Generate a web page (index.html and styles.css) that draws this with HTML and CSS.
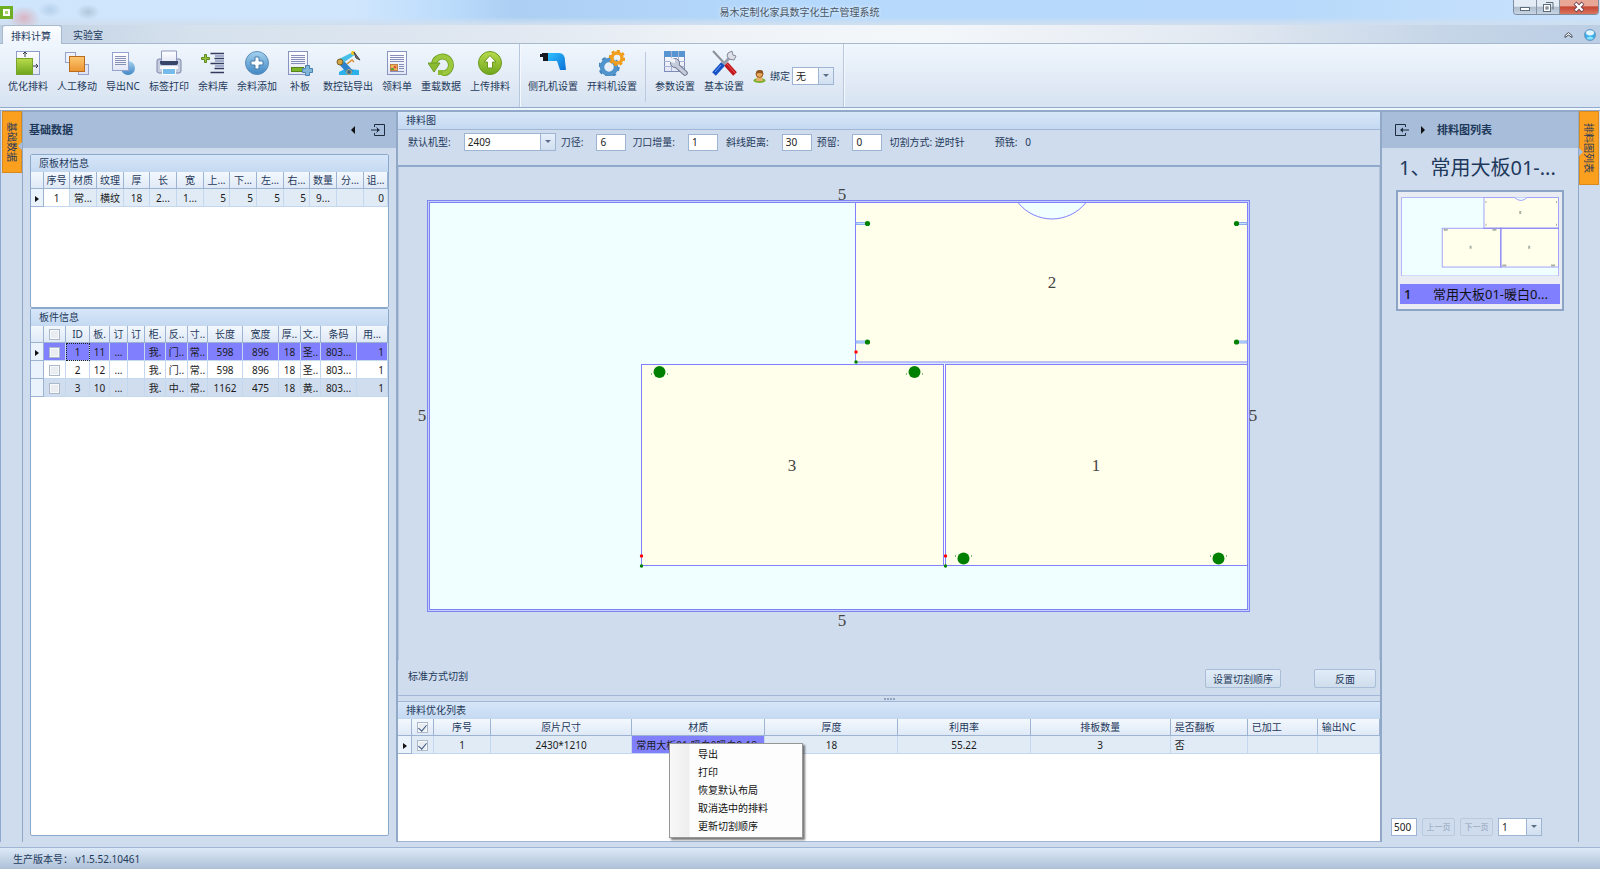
FILE: index.html
```html
<!DOCTYPE html>
<html lang="zh-CN">
<head>
<meta charset="utf-8">
<title>易木定制化家具数字化生产管理系统</title>
<link rel="stylesheet" href="styles.css">
</head>
<body>
<svg class="defs" aria-hidden="true">
  <defs>
    <linearGradient id="green" x1="0" y1="0" x2="0" y2="1"><stop offset="0" stop-color="#b9dc4c"/><stop offset="1" stop-color="#6fa51c"/></linearGradient>
    <linearGradient id="blue" x1="0" y1="0" x2="0" y2="1"><stop offset="0" stop-color="#a6d2ef"/><stop offset="1" stop-color="#3f86c4"/></linearGradient>
    <linearGradient id="orange" x1="0" y1="0" x2="0" y2="1"><stop offset="0" stop-color="#fdc873"/><stop offset="1" stop-color="#ec9430"/></linearGradient>
    <linearGradient id="paper" x1="0" y1="0" x2="0" y2="1"><stop offset="0" stop-color="#ffffff"/><stop offset="1" stop-color="#e2e6f5"/></linearGradient>
    <linearGradient id="drill" x1="0" y1="0" x2="1" y2="1"><stop offset="0" stop-color="#2fc0ff"/><stop offset="1" stop-color="#0a6fd6"/></linearGradient>
  </defs>
</svg>
<div class="app">
  <header class="titlebar">
    <svg class="logo" viewBox="0 0 13 13"><rect width="13" height="13" fill="#6eae22"/><rect x="3" y="3" width="7" height="7" fill="#fff"/><path d="M5 5h3v3H5z" fill="#a9d06f"/></svg>
    <h1 class="title">易木定制化家具数字化生产管理系统</h1>
    <div class="winbtns">
      <button class="win" aria-label="最小化"><svg viewBox="0 0 14 12"><rect x="2.500" y="6.500" width="9" height="3" fill="#fff" stroke="#5e6b7a"/></svg></button>
      <button class="win" aria-label="还原"><svg viewBox="0 0 14 12"><path d="M5 1.500h7v7" fill="none" stroke="#5e6b7a"/><rect x="2.500" y="3.500" width="7" height="7" fill="#fff" stroke="#5e6b7a"/><rect x="5" y="6" width="2" height="2" fill="#fff" stroke="#5e6b7a"/></svg></button>
      <button class="win close" aria-label="关闭"><svg viewBox="0 0 14 12"><path d="M3 2l8 8M11 2l-8 8" stroke="#6e4350" stroke-width="4"/><path d="M3.500 2.500l7 7M10.500 2.500l-7 7" stroke="#fff" stroke-width="2.400"/></svg></button>
    </div>
  </header>
  <nav class="tabs">
    <button class="tab active">排料计算</button>
    <button class="tab">实验室</button>
    <div class="tabtools">
      <button class="plain" aria-label="折叠"><svg width="9" height="8" viewBox="0 0 9 8"><path d="M1 4.500l3.500-3 3.500 3v2l-3.500-2.500-3.500 2.500z" fill="#fff" stroke="#454c58"/></svg></button>
      <button class="plain" aria-label="帮助"><svg width="12" height="12" viewBox="0 0 12 12"><circle cx="6" cy="6" r="5.500" fill="#38aee8" stroke="#7497c0"/><ellipse cx="6" cy="3.800" rx="4" ry="2.600" fill="#e3f6ff"/><ellipse cx="6" cy="9" rx="3" ry="1.500" fill="#8be3ff"/></svg></button>
    </div>
  </nav>

  <section class="ribbon">
    <div class="rgroup">
      <button class="tool"><svg viewBox="0 0 26 26"><rect x="1.500" y="1.500" width="23" height="23" fill="url(#paper)" stroke="#8c9cc8"/><rect x="1.500" y="8.500" width="16" height="16" fill="url(#green)" stroke="#79a32c"/><path d="M10 7V2M8 4l2-2 2 2M18 16h5M21 14l2 2-2 2" fill="none" stroke="#333b48"/></svg>优化排料</button>
      <button class="tool"><svg viewBox="0 0 26 26"><rect x="1.500" y="2.500" width="10" height="10" fill="#eef1fa" stroke="#95a3cc"/><rect x="14.500" y="14.500" width="10" height="10" fill="#dfe5f4" stroke="#95a3cc"/><rect x="5.500" y="6.500" width="15" height="15" fill="url(#orange)" stroke="#b96c1e"/></svg>人工移动</button>
      <button class="tool"><svg viewBox="0 0 26 26"><circle cx="18" cy="18" r="7" fill="url(#blue)"/><rect x="2.500" y="2.500" width="16" height="18" fill="url(#paper)" stroke="#95a3cc"/><path d="M5 6.500h11M5 8.500h11M5 10.500h11M5 12.500h11M5 14.500h11" stroke="#8791b8"/></svg>导出NC</button>
      <button class="tool"><svg viewBox="0 0 26 26"><rect x="1" y="9" width="24" height="14" rx="2" fill="#c6cde0" stroke="#7c87a8"/><path d="M5.500 1h15v12h-15z" fill="url(#paper)" stroke="#8d99be"/><path d="M4 11h18v2q0 2-3 2H7q-3 0-3-2z" fill="#37456b"/><path d="M4 16h18v3H4z" fill="#f5f7fc"/><path d="M6.500 18.500h13v6h-13z" fill="#74bbec" stroke="#fff"/></svg>标签打印</button>
      <button class="tool"><svg viewBox="0 0 26 26"><path d="M10.500 3.500H24M14.500 8.500H24M10.500 13.500H24M14.500 18.500H24M10.500 22.500H24" stroke="#323b5e" stroke-width="1.500"/><path d="M15 6h9M15 11h9M15 16h9" stroke="#a3add0" stroke-width="2"/><path d="M4.500 4.500h2v3h3v2h-3v3h-2v-3h-3v-2h3z" fill="#97c53c" stroke="#5b8a20"/></svg>余料库</button>
      <button class="tool"><svg viewBox="0 0 26 26"><circle cx="13" cy="13" r="11.500" fill="url(#blue)" stroke="#5c8ebb"/><path d="M11 7h4v4h4v4h-4v4h-4v-4H7v-4h4z" fill="#fff" stroke="#467ba9"/></svg>余料添加</button>
      <button class="tool"><svg viewBox="0 0 26 26"><rect x="1.500" y="1.500" width="19" height="23" fill="url(#paper)" stroke="#8794c0"/><path d="M4 5.500h14M4 7.500h14M4 9.500h14M4 11.500h14M4 13.500h14" stroke="#858fb9"/><rect x="4.500" y="17.500" width="12" height="4" fill="#7fb32a" stroke="#56851c"/><path d="M18.500 15.500h4v3h3v4h-3v3h-4v-3h-3v-4h3z" fill="#7fb6d9" stroke="#4c81ae"/></svg>补板</button>
      <button class="tool"><svg viewBox="0 0 26 26"><path d="M4 25v-3q4-3 9-3l11 1v5z" fill="#2cb1ea"/><path d="M6 12l10 11" stroke="#2d82cd" stroke-width="6"/><path d="M4 9L18 2l3 2-13 9z" fill="#45bfe8"/><circle cx="5" cy="12" r="3" fill="#d2a544" stroke="#7b602c"/><circle cx="14" cy="22" r="2.500" fill="#45688c" stroke="#b5ae71"/><circle cx="18" cy="3" r="2" fill="#f6c51f"/><path d="M19 2l6 8-4-2z" fill="#777" stroke="#444"/><path d="M12 14l5-4 2 2" stroke="#d98e2d" stroke-width="1.500" fill="none"/></svg>数控钻导出</button>
      <button class="tool"><svg viewBox="0 0 26 26"><rect x="3.500" y="1.500" width="19" height="23" fill="url(#paper)" stroke="#8794c0"/><path d="M6 5.500h14M6 7.500h14M6 9.500h14M6 11.500h14M15 14.500h5M15 16.500h5M15 18.500h5M6 21.500h14" stroke="#858fb9"/><rect x="6.500" y="14.500" width="7" height="6" fill="#f2b65c" stroke="#c08046"/><circle cx="11" cy="17" r="1.500" fill="#d9593a"/><path d="M7 18h3v2H7z" fill="#659c37"/></svg>领料单</button>
      <button class="tool"><svg viewBox="0 0 26 26"><path d="M6 14a8.500 8.500 0 1 1 8 9.500" fill="none" stroke="#6c9b24" stroke-width="6"/><path d="M6 14a8.500 8.500 0 1 1 8 9.500" fill="none" stroke="#9bc83c" stroke-width="4.500"/><path d="M0 13h12l-6 9z" fill="#8abb30" stroke="#6c9b24"/><path d="M10 20h5v5h-5z" fill="#8abb30"/></svg>重载数据</button>
      <button class="tool"><svg viewBox="0 0 26 26"><circle cx="13" cy="13" r="11.500" fill="url(#green)" stroke="#6b9a20"/><path d="M13 5.500l6 6.500h-3.500v6h-5v-6H7z" fill="#fff" stroke="#6b9a20"/></svg>上传排料</button>
    </div>
    <div class="rgroup">
      <button class="tool"><svg viewBox="0 0 26 26"><path d="M8 3h11q6 0 6 8l1 9h-6l-3-9H8z" fill="url(#drill)"/><path d="M0 4h2V3h6v8H3V7H0z" fill="#16191f"/></svg>侧孔机设置</button>
      <button class="tool"><svg viewBox="0 0 26 26"><circle cx="10" cy="17" r="7" fill="none" stroke="#4f94cc" stroke-width="4.500"/><circle cx="10" cy="17" r="9.700" fill="none" stroke="#4486bd" stroke-width="2" stroke-dasharray="4 3.600"/><circle cx="18" cy="8" r="5" fill="none" stroke="#f2a021" stroke-width="3.500"/><circle cx="18" cy="8" r="7.200" fill="none" stroke="#ef9714" stroke-width="2" stroke-dasharray="3 2.600"/></svg>开料机设置</button>
      <span class="rsep"></span>
      <button class="tool"><svg viewBox="0 0 26 26"><rect x="2.500" y="1.500" width="20" height="20" fill="url(#paper)" stroke="#7f8cb9"/><path d="M2 1h21v6H2z" fill="#5795d2"/><path d="M9.500 1v20M16.500 1v20M2 11.500h21M2 16.500h21" stroke="#a6b3d3"/><path d="M14 15l9 8" stroke="#6f7993" stroke-width="5.500" stroke-linecap="round"/><circle cx="13" cy="13" r="4.500" fill="#c6ccdb" stroke="#6f7993"/><path d="M14 15l9 8" stroke="#c6ccdb" stroke-width="3.500" stroke-linecap="round"/><path d="M9 8l4 1v4l-5-1z" fill="#eef2f9"/></svg>参数设置</button>
      <button class="tool"><svg viewBox="0 0 26 26"><path d="M2 1l13 14" stroke="#8c8f98" stroke-width="2"/><path d="M15 14l9 10" stroke="#c0181e" stroke-width="5"/><path d="M16 14l8 9" stroke="#f05450"/><path d="M20 6L11 16" stroke="#9aa0ad" stroke-width="3"/><path d="M12 14L3 24" stroke="#1651c4" stroke-width="5"/><path d="M10 15l-6 7" stroke="#70a3ff"/><path d="M17 3l4-2 1 4 3 1-2 4-5-1-2-3z" fill="#dde0e8" stroke="#858a98"/></svg>基本设置</button>
      <label class="bind" for="bind"><svg width="13" height="13" viewBox="0 0 13 13"><ellipse cx="6.500" cy="10.500" rx="6" ry="2.500" fill="#7eae2e"/><path d="M4 7h5l1 4H3z" fill="#e7b06a"/><circle cx="6.500" cy="4" r="3.500" fill="#e6a75a" stroke="#965e25"/><path d="M3 4q0-4 4-4t3 4q-4-2-7 0z" fill="#925822"/></svg>绑定</label>
      <span class="combo w42"><select id="bind"><option>无</option></select></span>
    </div>
  </section>

  <main class="main">
    <aside class="strip"><button class="side left">基础数据</button></aside>
    <section class="dock">
      <header class="dockhead"><h2>基础数据</h2>
        <button class="plain" aria-label="收起"><svg width="6" height="8" viewBox="0 0 6 8"><path d="M5 0v8L1 4z" fill="#111"/></svg></button>
        <button class="plain" aria-label="固定"><svg width="14" height="12" viewBox="0 0 14 12"><path d="M3.500 3V.5h10v11h-10V9M0 6h8M5.500 3.500L8 6 5.500 8.500" fill="none" stroke="#1d2b3e"/><path d="M6 4v4l3-2z" fill="#1d2b3e"/></svg></button>
      </header>
      <div class="dockbody">
        <section class="box board">
          <h3>原板材信息</h3>
          <table class="grid">
            <colgroup><col style="width:13px"><col style="width:26px"><col style="width:27px"><col style="width:27px"><col style="width:26px"><col style="width:27px"><col style="width:27px"><col style="width:26px"><col style="width:27px"><col style="width:27px"><col style="width:26px"><col style="width:27px"><col style="width:27px"><col style="width:24px"></colgroup>
            <thead><tr><th></th><th>序号</th><th>材质</th><th>纹理</th><th>厚</th><th>长</th><th>宽</th><th>上...</th><th>下...</th><th>左...</th><th>右...</th><th>数量</th><th>分...</th><th>诅...</th></tr></thead>
            <tbody><tr class="tint"><td class="ind"><i class="arrow"></i></td><td class="white">1</td><td>常...</td><td>横纹</td><td>18</td><td>2...</td><td>1...</td><td class="r">5</td><td class="r">5</td><td class="r">5</td><td class="r">5</td><td>9...</td><td></td><td class="r">0</td></tr></tbody>
          </table>
        </section>
        <section class="box parts">
          <h3>板件信息</h3>
          <table class="grid">
            <colgroup><col style="width:13px"><col style="width:22px"><col style="width:24px"><col style="width:20px"><col style="width:18px"><col style="width:17px"><col style="width:21px"><col style="width:22px"><col style="width:20px"><col style="width:35px"><col style="width:36px"><col style="width:22px"><col style="width:20px"><col style="width:36px"><col style="width:31px"></colgroup>
            <thead><tr><th></th><th><input type="checkbox" aria-label="全选"></th><th>ID</th><th>板.</th><th>订</th><th>订</th><th>柜.</th><th>反..</th><th>寸..</th><th>长度</th><th>宽度</th><th>厚..</th><th>文..</th><th>条码</th><th>用...</th></tr></thead>
            <tbody>
              <tr class="sel"><td class="ind"><i class="arrow"></i></td><td><input type="checkbox" aria-label="选择 1"></td><td class="focus">1</td><td>11</td><td>...</td><td></td><td>我.</td><td>门..</td><td>常..</td><td>598</td><td>896</td><td>18</td><td>圣..</td><td>803...</td><td class="r">1</td></tr>
              <tr><td class="ind"></td><td><input type="checkbox" aria-label="选择 2"></td><td>2</td><td>12</td><td>...</td><td></td><td>我.</td><td>门..</td><td>常..</td><td>598</td><td>896</td><td>18</td><td>圣..</td><td>803...</td><td class="r">1</td></tr>
              <tr class="alt"><td class="ind"></td><td><input type="checkbox" aria-label="选择 3"></td><td>3</td><td>10</td><td>...</td><td></td><td>我.</td><td>中..</td><td>常..</td><td>1162</td><td>475</td><td>18</td><td>黄..</td><td>803...</td><td class="r">1</td></tr>
            </tbody>
          </table>
        </section>
      </div>
    </section>

    <section class="center">
      <section class="layout">
        <h3>排料图</h3>
        <form class="params">
          <label for="machine">默认机型:</label><span class="combo w92 g5"><select id="machine"><option>2409</option></select></span>
          <label for="dia">刀径:</label><input class="num g6" id="dia" value="6">
          <label for="inc">刀口增量:</label><input class="num g9" id="inc" value="1">
          <label for="slant">斜线距离:</label><input class="num g5" id="slant" value="30">
          <label for="keep">预留:</label><input class="num g8" id="keep" value="0">
          <span class="g28">切割方式: 逆时针</span><span>预铣:&nbsp;&nbsp; 0</span>
        </form>
        <div class="canvas">
          <svg viewBox="399 167 980 493" preserveAspectRatio="xMidYMid meet">
            <rect x="428.500" y="201.500" width="820" height="409" fill="#f0ffff" stroke="#7f84f3" stroke-width="3"/>
            <rect x="428.500" y="201.500" width="820" height="409" fill="none" stroke="#c4d0fb"/>
            <g fill="#ffffeb" stroke="#8080ff">
              <path d="M855.500 202.500H1018a43.300 43.300 0 0 0 68 0h161.500v159.500h-392z"/>
              <rect x="641.500" y="364.500" width="302" height="201"/>
              <rect x="945.500" y="364.500" width="302" height="201"/>
            </g>
            <path d="M1018 202.500h68" stroke="#8080ff"/>
            <path d="M944.500 365v201" stroke="#fff"/>
            <path d="M856 363.500h391" stroke="#dbe6ff"/>
            <g fill="#c3e4fb" stroke="#8faaf5"><path d="M856 222.500h10v2h-10zM856 341h10v2h-10zM1237 222.500h10v2h-10zM1237 341h10v2h-10z"/></g>
            <g fill="#008000">
              <circle cx="867.500" cy="223.500" r="2.600"/><circle cx="867.500" cy="342" r="2.600"/><circle cx="1236.500" cy="223.500" r="2.600"/><circle cx="1236.500" cy="342" r="2.600"/>
              <circle cx="659.500" cy="372" r="6"/><circle cx="914.500" cy="372" r="6"/><circle cx="963.500" cy="558.500" r="6"/><circle cx="1218.500" cy="558.500" r="6"/>
              <path d="M651 373.500h1v1h-1zM667 373.500h1v1h-1zM906 373.500h1v1h-1zM922 373.500h1v1h-1zM955 555.500h1v1h-1zM971 555.500h1v1h-1zM1210 555.500h1v1h-1zM1226 555.500h1v1h-1z"/>
              <circle cx="856" cy="362" r="1.700"/><circle cx="641.500" cy="566" r="1.700"/><circle cx="945.500" cy="566" r="1.700"/>
            </g>
            <g fill="#f00"><circle cx="856" cy="352" r="1.700"/><circle cx="641.500" cy="556" r="1.700"/><circle cx="945.500" cy="556" r="1.700"/></g>
            <g class="dims"><text x="842" y="200">5</text><text x="422" y="421">5</text><text x="1253" y="421">5</text><text x="842" y="626">5</text><text x="1052" y="288">2</text><text x="792" y="471">3</text><text x="1096" y="471">1</text></g>
          </svg>
        </div>
        <footer class="layoutfoot"><span>标准方式切割</span><button class="btn order">设置切割顺序</button><button class="btn flip">反面</button></footer>
      </section>
      <div class="split"><i></i><i></i><i></i><i></i></div>
      <section class="result">
        <h3>排料优化列表</h3>
        <table class="grid">
          <colgroup><col style="width:14px"><col style="width:22px"><col style="width:57px"><col style="width:141px"><col style="width:133px"><col style="width:133px"><col style="width:132px"><col style="width:140px"><col style="width:77px"><col style="width:70px"><col style="width:62px"></colgroup>
          <thead><tr><th></th><th><input type="checkbox" checked aria-label="全选"></th><th>序号</th><th>原片尺寸</th><th>材质</th><th>厚度</th><th>利用率</th><th>排板数量</th><th class="l">是否翻板</th><th class="l">已加工</th><th class="l">输出NC</th></tr></thead>
          <tbody><tr class="tint"><td class="ind"><i class="arrow"></i></td><td><input type="checkbox" checked aria-label="选择 1"></td><td>1</td><td>2430*1210</td><td class="hot l">常用大板01-暖白0暖白0-18</td><td>18</td><td>55.22</td><td>3</td><td class="l">否</td><td></td><td></td></tr></tbody>
        </table>
        <menu class="menu"><li><button>导出</button></li><li><button>打印</button></li><li><button>恢复默认布局</button></li><li><button>取消选中的排料</button></li><li><button>更新切割顺序</button></li></menu>
      </section>
    </section>

    <section class="dock listdock">
      <header class="dockhead">
        <button class="plain" aria-label="固定"><svg width="14" height="12" viewBox="0 0 14 12"><path d="M10.500 3V.5H.5v11h10V9M14 6H6" fill="none" stroke="#1d2b3e"/><path d="M8 3.500v5L5 6z" fill="#1d2b3e"/></svg></button>
        <button class="plain" aria-label="收起"><svg width="6" height="8" viewBox="0 0 6 8"><path d="M1 0v8l4-4z" fill="#111"/></svg></button>
        <h2>排料图列表</h2>
      </header>
      <div class="listbody">
        <p class="big">1、常用大板01-...</p>
        <figure class="card">
          <svg viewBox="0 0 159 80"><rect x=".5" y=".5" width="158" height="79" fill="#f0ffff" stroke="#b3b6fa"/><g fill="#ffffeb" stroke="#a3a3fb"><rect x="83.500" y=".5" width="75" height="31"/><rect x="41.500" y="31.500" width="59" height="39"/><rect x="100.500" y="31.500" width="58" height="39"/><path d="M114 .5q7 6 13 0" fill="#f0ffff"/></g><path d="M83 31.500h76M100.500 31v40" stroke="#8585f5"/><g fill="#a9b0a8"><path d="M85 4h1v2h-1zM85 27h1v2h-1zM156 4h1v2h-1zM156 27h1v2h-1zM43 32h4v2h-4zM92 32h4v2h-4zM102 68h4v2h-4zM151 68h4v2h-4zM119 14h2v3h-2zM69 49h2v3h-2zM128 49h2v3h-2z"/></g></svg>
          <figcaption><b>1</b><span>常用大板01-暖白0...</span></figcaption>
        </figure>
        <div class="pager">
          <input class="num size" aria-label="每页数量" value="500"><button class="btn off" disabled>上一页</button><button class="btn off" disabled>下一页</button><span class="combo w44"><select aria-label="页码"><option>1</option></select></span>
        </div>
      </div>
    </section>
    <aside class="strip rightstrip"><button class="side right">排料图列表</button></aside>
  </main>
  <footer class="status"><span>生产版本号： v1.5.52.10461</span></footer>
</div>
</body>
</html>
```
FILE: styles.css
```css
* { box-sizing: border-box; }
body { margin: 0; }
body, button, input, select {
  font-family: "Noto Sans", "Noto Sans CJK SC", sans-serif;
  font-size: 10px;
  line-height: 14px;
  color: #1e395b;
}
button, input, select { margin: 0; padding: 0; }
h1, h2, h3, p, figure, menu { margin: 0; padding: 0; font-weight: normal; }
.defs { position: absolute; width: 0; height: 0; }
.app { display: flex; flex-direction: column; min-height: 100vh; background: #cfdced; }

.titlebar {
  display: flex; align-items: flex-start; height: 25px;
  background:
    radial-gradient(ellipse 16px 12px at 24px 18px, #dba9b7cc, #dba9b700),
    radial-gradient(ellipse 12px 8px at 50px 10px, #8fb1d466, #8fb1d400),
    radial-gradient(ellipse 12px 8px at 88px 12px, #7f9fae66, #7f9fae00),
    linear-gradient(#ffffff00 17px, #cfdff0 24px),
    linear-gradient(90deg, #cfe5fb 0, #d0e6fd 22%, #bcdcfb 28%, #accff3 32%, #b5d9fc 50%, #b8d9fb 80%, #bddcfb 86%, #c9e2fd 100%);
}
.logo { width: 13px; height: 13px; margin-top: 6px; flex: none; }
.title { flex: 1; padding: 5px 0 0 73px; text-align: center; font-size: 10px; color: #4a5563; text-shadow: 0 0 4px #fff; }
.winbtns { display: flex; width: 86px; height: 15px; margin-right: 1px; border: 1px solid #7f8d9f; border-top: 0; border-radius: 0 0 4px 4px; overflow: hidden; }
.win { flex: 24; border: 0; border-right: 1px solid #8693a5; background: linear-gradient(#e3ecf5 45%, #aebccd 50%, #c7d5e4); display: flex; align-items: center; justify-content: center; }
.win svg { width: 14px; height: 12px; }
.win.close { flex: 41; border-right: 0; background: linear-gradient(#e8a696 40%, #c74734 50%, #d97460); }

.tabs {
  display: flex; align-items: flex-end; height: 19px; padding-left: 2px; border-bottom: 1px solid #a6b9cf;
  background: linear-gradient(90deg, #bfcfe2, #d5e1ed 12%, #e1e8f1 32%, #eff3f7 45%, #f4f7fa 58%, #e4eaf2 75%, #c6d6e8 90%, #bbcee4);
}
.tab { height: 18px; width: 52px; padding-top: 2px; border: 0; background: none; }
.tab.active { width: 60px; margin-bottom: -1px; height: 19px; padding: 2px 2px 0 0; border: 1px solid #a6b9cf; border-bottom: 0; border-radius: 3px 3px 0 0; background: linear-gradient(#fbfdff, #eff5fd); }
.tabtools { margin-left: auto; display: flex; align-items: center; gap: 11px; padding: 0 4px 2px 0; }
.plain { border: 0; background: none; display: flex; }

.ribbon { display: flex; height: 67px; flex: none; border-bottom: 4px double #93a9c9; background: linear-gradient(#eff6fe, #e1eaf5 60%, #d6e3f2); }
.rgroup { display: flex; align-items: flex-start; gap: 1px; padding: 4px 5px 0 4px; border-right: 1px solid #b7c7dc; box-shadow: 1px 0 #f5f9fe; }
.tool { display: flex; flex-direction: column; align-items: center; min-width: 36px; gap: 3px; padding: 2px 4px 0; border: 0; background: none; white-space: nowrap; }
.tool svg { width: 26px; height: 26px; }
.rsep { width: 1px; height: 50px; margin: 4px 4px 0 3px; background: #bccbe0; }
.bind { display: flex; align-items: center; gap: 4px; margin: 21px 0 0 4px; }
.combo { position: relative; display: inline-flex; height: 18px; border: 1px solid #9db4d3; background: #fff; }
.combo select { appearance: none; width: 100%; border: 0; background: transparent; padding: 0 15px 0 3px; color: #222; outline: 0; }
.combo::before { content: ""; position: absolute; top: 0; right: 0; width: 14px; height: 100%; border-left: 1px solid #9db4d3; background: linear-gradient(#e6effa, #d1dfef); pointer-events: none; }
.combo::after { content: ""; position: absolute; top: 6px; right: 4px; border: 3px solid transparent; border-top-color: #5c6e88; border-bottom: 0; pointer-events: none; }
.w42 { width: 42px; margin: 19px 4px 0 1px; }
.w44 { width: 44px; }
.w92 { width: 92px; }

.main { flex: 1; display: flex; padding-bottom: 5px; border-bottom: 1px solid #9fb5d3; }
.strip { width: 22px; flex: none; padding-left: 1px; border-left: 1px solid #8fa8cb; }
.rightstrip { width: 21px; padding: 0; border: 0; }
.side { position: relative; display: flex; align-items: center; justify-content: center; width: 20px; height: 62px; border: 1px solid #d98a1e; background: #fb9f1f; writing-mode: vertical-rl; text-orientation: sideways; }
.side.right { height: 74px; }
.side::after { content: ""; position: absolute; top: 50%; border: 4px solid transparent; }
.left::after { right: -1px; border-right-color: #a7bdd9; border-left: 0; }
.right::after { left: -1px; border-left-color: #a7bdd9; border-right: 0; }

.dock { width: 375px; flex: none; display: flex; flex-direction: column; border: 1px solid #91a8c6; border-width: 1px 1px 0; }
.dockhead { display: flex; align-items: center; gap: 15px; height: 36px; flex: none; padding: 0 11px 0 6px; background: #a7bdd9; }
.dockhead h2 { font-size: 11px; font-weight: bold; margin-right: auto; }
.dockbody { flex: 1; display: flex; flex-direction: column; padding: 6px 7px; }
.box { border: 1px solid #8ba9cc; border-radius: 2px; background: #fff; }
.board { height: 154px; }
.parts { flex: 1; }
h3 { height: 17px; padding-left: 8px; font-size: 10px; line-height: 17px; background: linear-gradient(#d7e6f9, #c4d9f1); }

.grid { width: 100%; table-layout: fixed; border-collapse: separate; border-spacing: 0; }
.grid th, .grid td { height: 17px; padding: 0 1px; overflow: hidden; white-space: nowrap; text-align: center; line-height: 16px; border-right: 1px solid #c3d7ef; border-bottom: 1px solid #c3d7ef; }
.grid td { height: 18px; color: #1b1b1b; }
.grid th { font-weight: normal; background: linear-gradient(#f3f8fe, #dfe9f6); border-right-color: #9cb4d2; border-bottom-color: #9cb4d2; }
.grid .r { text-align: right; padding-right: 3px; }
.grid .l { text-align: left; padding-left: 4px; }
.grid .ind { background: #eaf2fb; border-color: #9cb4d2; }
.grid .white { background: #fff; }
.grid .hot { background: #8080ff; }
.tint { background: #e1ebf6; }
.alt { background: #d0ddee; }
.sel td { background: #8080ff; }
.grid .focus { outline: 1px dotted #222; outline-offset: -1px; }
.arrow { display: inline-block; border: 3px solid transparent; border-left: 4px solid #111; border-right: 0; }
input[type=checkbox] { appearance: none; display: inline-block; vertical-align: -2px; width: 11px; height: 11px; border: 1px solid #aab8ca; background: #e9edf2; box-shadow: inset 0 0 0 1px #f8f9fb; }
input[type=checkbox]:checked::after { content: ""; display: block; width: 4px; height: 7px; margin: 0 auto; border: solid #39567f; border-width: 0 1px 1px 0; transform: rotate(40deg); }

.center { flex: 1; min-width: 0; display: flex; flex-direction: column; border: 1px solid #91a8c6; border-width: 1px 1px 0; }
.layout { flex: 1; display: flex; flex-direction: column; border-bottom: 1px solid #a0b7d5; }
.params { display: flex; align-items: center; height: 38px; padding: 0 10px 11px; margin: 0; border-top: 1px solid #a0b7d5; border-bottom: 2px solid #8ea9cc; white-space: nowrap; }
.params label { margin-right: 13px; }
.num { width: 30px; height: 17px; padding: 0 3px; border: 1px solid #9db4d3; background: #fff; color: #222; }
.params .g5 { margin-right: 5px; }
.params .g6 { margin-right: 6px; }
.params .g8 { margin-right: 7px; }
.params .g9 { margin-right: 8px; }
.params .g28 { margin-right: 30px; }
.canvas { flex: 1; min-height: 0; display: flex; border: solid #b3c4db; border-width: 0 1px; }
.canvas svg { display: block; width: 100%; height: auto; }
.dims { font-family: "Liberation Serif", serif; font-size: 17px; text-anchor: middle; fill: #444; }
.layoutfoot { display: flex; align-items: center; height: 35px; padding: 2px 4px 0 10px; }
.layoutfoot span { margin-right: auto; padding-bottom: 5px; }
.btn { height: 19px; border: 1px solid #a9bdd8; border-radius: 2px; background: linear-gradient(#e1ecf8, #cfddec); }
.order { width: 76px; margin-right: 33px; }
.flip { width: 62px; }
.split { display: flex; justify-content: center; align-items: center; gap: 1px; height: 5px; }
.split i { width: 2px; height: 2px; background: #8fa3be; }
.result { position: relative; height: 141px; border: solid #9fb5d3; border-width: 1px 0; background: #fff; }
.menu { position: absolute; top: 41px; left: 27.6%; width: 134px; padding: 1px 2px 2px; list-style: none; border: 1px solid #979797; background: linear-gradient(90deg, #f8f8f8, #eee 19px, #fdfdfd 20px); box-shadow: 2px 2px 2px #0008; }
.menu button { width: 100%; height: 18px; padding-left: 26px; border: 0; background: none; text-align: left; color: #111; }

.listdock { width: 198px; }
.listdock .dockhead { padding-left: 13px; gap: 11px; }
.listbody { flex: 1; display: flex; flex-direction: column; padding: 6px 14px 6px 14px; }
.big { padding-left: 3px; font-size: 20px; line-height: 28px; white-space: nowrap; }
.card { margin-top: 8px; padding: 5px 2px; border: 2px solid #8ba5c6; background: #e9edf3; }
.card svg { display: block; width: 100%; padding: 0 1px; }
.card figcaption { display: flex; height: 20px; margin-top: 8px; align-items: center; background: #8080ff; color: #111; font-size: 13px; line-height: 18px; white-space: nowrap; }
.card b { width: 33px; padding-left: 4px; font-weight: 500; }
.pager { display: flex; margin: auto 0 0 -5px; gap: 5px; }
.pager .size { width: 26px; padding: 0 2px; }
.pager .num, .pager .btn, .pager .combo { height: 18px; }
.pager .off { width: 33px; color: #91a3ba; border-color: #b9cade; font-size: 8px; background: #cfdced; }

.status { height: 23px; flex: none; padding: 4px 13px; border-bottom: 2px solid #64768d; background: linear-gradient(#dce9f7, #adc0d7); }
```
